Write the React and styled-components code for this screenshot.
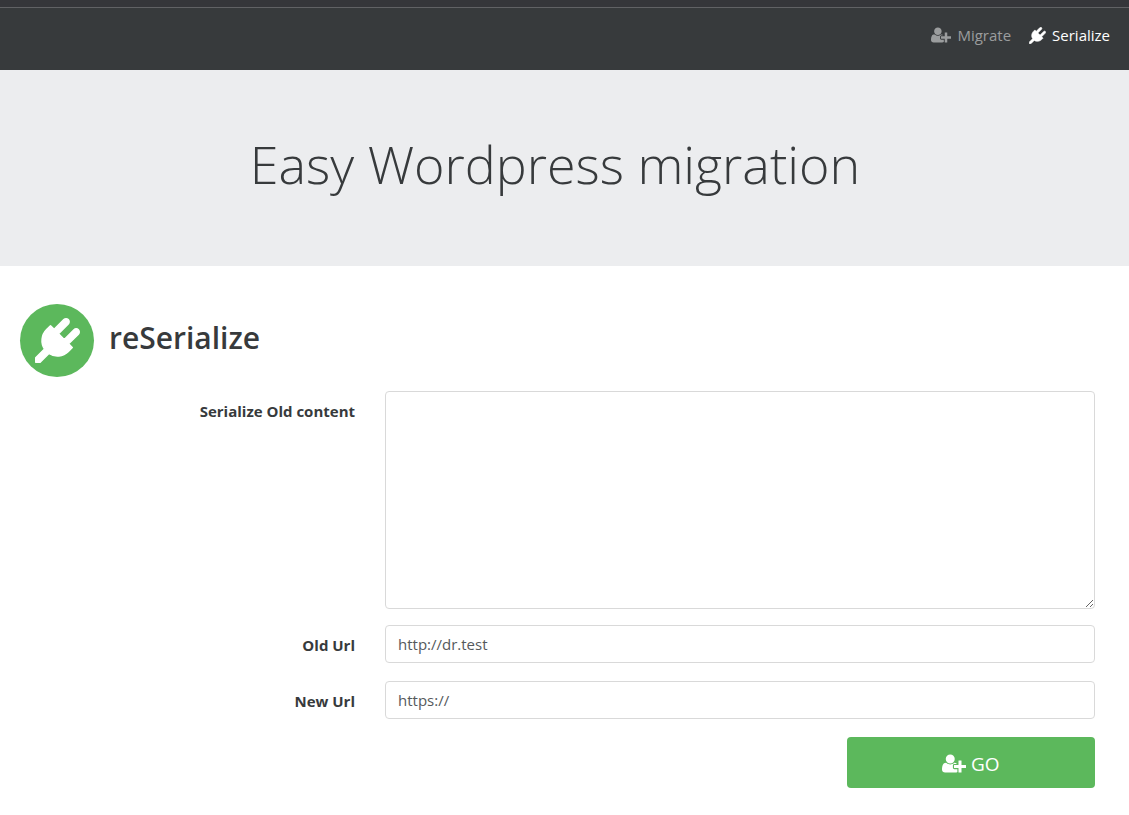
import React, { useState } from "react";
import styled, { createGlobalStyle } from "styled-components";

const GlobalStyle = createGlobalStyle`
  *, *::before, *::after { box-sizing: border-box; }
  body {
    margin: 0;
    background: #fff;
    color: #373a3c;
    font-family: "Segoe UI", "Open Sans", "Noto Sans", sans-serif;
    font-size: 15px;
    line-height: 24px;
  }
`;

const TopStrip = styled.div`
  height: 8px;
  background: #35363a;
  border-bottom: 1px solid #616265;
`;

const Navbar = styled.nav`
  display: flex;
  justify-content: flex-end;
  gap: 18px;
  padding: 15px 19px 23px;
  background: #373a3c;
`;

const NavLink = styled.a`
  display: flex;
  align-items: center;
  gap: 6px;
  color: ${(p) => (p.$active ? "#fff" : "#9b9d9e")};
  text-decoration: none;
`;

const Glyph = styled.svg`
  display: block;
  flex: none;
  fill: currentColor;
  width: ${(p) => p.$width}px;
  height: ${(p) => p.$height}px;
`;

const Hero = styled.header`
  padding: 60px 19px 68px 0;
  background: #ecedef;
  text-align: center;
`;

const HeroTitle = styled.h1`
  margin: 0;
  font-size: 52px;
  font-weight: 300;
  line-height: 68px;
`;

const Main = styled.main`
  padding: 38px 19px 27px 0;
`;

const SectionHead = styled.div`
  display: flex;
  align-items: center;
  gap: 15px;
  padding-left: 20px;
  margin-bottom: 14px;
`;

const Badge = styled.span`
  display: grid;
  place-items: center;
  width: 74px;
  height: 73px;
  border-radius: 50%;
  background: #5cb85c;
  color: #fff;
`;

const SectionTitle = styled.h2`
  margin: 0 0 5px;
  font-size: 30px;
  font-weight: 600;
  line-height: 36px;
`;

const Form = styled.form`
  display: grid;
  gap: 18px;
`;

const Row = styled.div`
  display: grid;
  grid-template-columns: 1fr 2fr;
`;

const Label = styled.label`
  padding: 8px 15px 6px;
  font-weight: 700;
  text-align: right;
`;

const Field = styled.div`
  display: flex;
  grid-column: 2;
  justify-content: flex-end;
  padding: 0 15px;
`;

const Input = styled.input`
  width: 100%;
  height: 38px;
  padding: 6px 12px;
  border: 1px solid #d9d9d9;
  border-radius: 4px;
  background: #fff;
  color: #55595c;
  font: inherit;
`;

const TextArea = styled(Input)`
  display: block;
  height: 218px;
  margin-bottom: -2px;
  resize: vertical;
`;

const GoButton = styled.button`
  display: flex;
  align-items: center;
  justify-content: center;
  gap: 5px;
  width: 35%;
  height: 51px;
  padding: 2px 0 0;
  border: 0;
  border-radius: 4px;
  background: #5cb85c;
  color: #fff;
  font: inherit;
  font-size: 19px;
  cursor: pointer;
`;

function PlugIcon({ size }) {
  return (
    <Glyph $width={size} $height={size} viewBox="-30 -30 1852 1852" aria-hidden="true">
      <path
        stroke="currentColor"
        strokeWidth="60"
        strokeLinejoin="round"
        d="M1755 453q37 38 37 90.5t-37 90.5l-401 400 150 150-160 160q-163 163-389.5 186.5t-411.5-100.5l-362 362h-181v-181l362-362q-124-185-100.5-411.5t186.5-389.5l160-160 150 150 400-401q38-37 91-37t90 37 37 90.5-37 90.5l-400 401 234 234 401-400q38-37 91-37t90 37z"
      />
    </Glyph>
  );
}

function UserPlusIcon({ width, height }) {
  return (
    <Glyph $width={width} $height={height} viewBox="0 0 2048 1792" aria-hidden="true">
      <path d="M704 896q-159 0-271.5-112.500t-112.500-271.500 112.500-271.500 271.500-112.500 271.500 112.500 112.500 271.500-112.500 271.500-271.500 112.500zM1664 1024h352q13 0 22.500 9.500t9.500 22.500v192q0 13-9.500 22.500t-22.500 9.500h-352v352q0 13-9.500 22.500t-22.500 9.500h-192q-13 0-22.500-9.500t-9.500-22.500v-352h-352q-13 0-22.500-9.500t-9.500-22.500v-192q0-13 9.500-22.500t22.500-9.500h352v-352q0-13 9.500-22.500t22.500-9.500h192q13 0 22.500 9.500t9.500 22.500v352zM928 1248q0 52 38 90t90 38h256v238q-68 50-171 50h-874q-121 0-194-69t-73-190q0-53 3.500-103.500t14-109 26.500-108.500 43-97.500 62-81 85.500-53.500 111.500-20q19 0 39 17 79 61 154.500 91.500t164.500 30.500 164.500-30.500 154.500-91.500q20-17 39-17 132 0 217 96h-223q-52 0-90 38t-38 90v192z" />
    </Glyph>
  );
}

export default function App() {
  const [content, setContent] = useState("");
  const [oldUrl, setOldUrl] = useState("http://dr.test");
  const [newUrl, setNewUrl] = useState("https://");

  return (
    <>
      <GlobalStyle />
      <TopStrip />
      <Navbar>
        <NavLink href="#migrate">
          <UserPlusIcon width={20} height={18} />
          Migrate
        </NavLink>
        <NavLink href="#serialize" $active aria-current="page">
          <PlugIcon size={17} />
          Serialize
        </NavLink>
      </Navbar>
      <Hero>
        <HeroTitle>Easy Wordpress migration</HeroTitle>
      </Hero>
      <Main>
        <SectionHead>
          <Badge>
            <PlugIcon size={45} />
          </Badge>
          <SectionTitle>reSerialize</SectionTitle>
        </SectionHead>
        <Form onSubmit={(e) => e.preventDefault()}>
          <Row>
            <Label htmlFor="content">Serialize Old content</Label>
            <Field>
              <TextArea
                as="textarea"
                id="content"
                value={content}
                onChange={(e) => setContent(e.target.value)}
              />
            </Field>
          </Row>
          <Row>
            <Label htmlFor="old-url">Old Url</Label>
            <Field>
              <Input id="old-url" value={oldUrl} onChange={(e) => setOldUrl(e.target.value)} />
            </Field>
          </Row>
          <Row>
            <Label htmlFor="new-url">New Url</Label>
            <Field>
              <Input id="new-url" value={newUrl} onChange={(e) => setNewUrl(e.target.value)} />
            </Field>
          </Row>
          <Row>
            <Field>
              <GoButton type="submit">
                <UserPlusIcon width={24} height={21} />
                GO
              </GoButton>
            </Field>
          </Row>
        </Form>
      </Main>
    </>
  );
}
